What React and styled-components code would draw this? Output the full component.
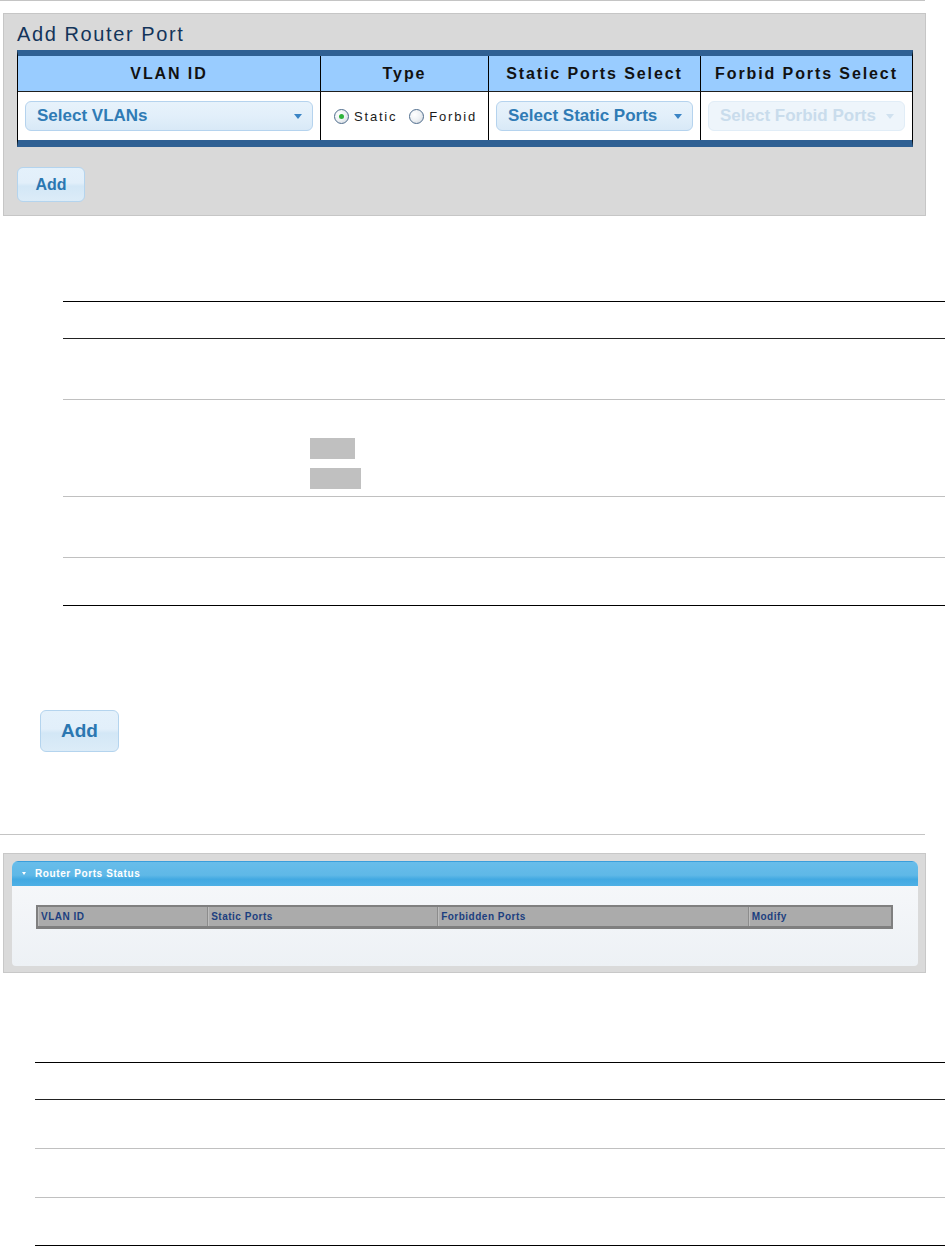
import React from 'react';
import styled, { createGlobalStyle } from 'styled-components';

const GlobalStyle = createGlobalStyle`
    body {
        margin: 0;
        background: #fff;
        font-family: "Liberation Sans", Arial, sans-serif;
    }
`;

const columns = [
    { title: 'VLAN ID', w: 302 },
    { title: 'Type', w: 167 },
    { title: 'Static Ports Select', w: 211 },
    { title: 'Forbid Ports Select', w: 211 },
];

const statusCols = [
    { title: 'VLAN ID', w: 171 },
    { title: 'Static Ports', w: 231 },
    { title: 'Forbidden Ports', w: 312 },
    { title: 'Modify', w: 143 },
];

export default function App() {
    return (
        <Page>
            <GlobalStyle />
            <Rule />

            <FormPanel>
                <Title>Add Router Port</Title>
                <FormTable>
                    <thead>
                        <tr>
                            {columns.map((c, i) => (
                                <Th key={c.title} $w={c.w} $last={i === columns.length - 1}>
                                    {c.title}
                                </Th>
                            ))}
                        </tr>
                    </thead>
                    <tbody>
                        <tr>
                            <Td>
                                <SelectBox>
                                    Select VLANs
                                    <Caret />
                                </SelectBox>
                            </Td>
                            <Td $radio>
                                <RadioGroup>
                                    <RadioLabel>
                                        <Radio $checked />
                                        Static
                                    </RadioLabel>
                                    <RadioLabel>
                                        <Radio />
                                        Forbid
                                    </RadioLabel>
                                </RadioGroup>
                            </Td>
                            <Td>
                                <SelectBox>
                                    Select Static Ports
                                    <Caret />
                                </SelectBox>
                            </Td>
                            <Td $last>
                                <SelectBox $disabled>
                                    Select Forbid Ports
                                    <Caret $disabled />
                                </SelectBox>
                            </Td>
                        </tr>
                    </tbody>
                </FormTable>
                <AddButton>Add</AddButton>
            </FormPanel>

            <DocTable $top={85} $left={63}>
                <DocRow $h={37} $head />
                <DocRow $h={61} />
                <DocRow $h={97}>
                    <span />
                    <Marks>
                        <Mark $w={45} />
                        <Mark $w={51} />
                    </Marks>
                </DocRow>
                <DocRow $h={61} />
                <DocRow $h={47} />
            </DocTable>

            <AddButton $big>Add</AddButton>

            <Rule $top={82} />

            <StatusPanel>
                <StatusBox>
                    <StatusHeader>
                        <Triangle />
                        Router Ports Status
                    </StatusHeader>
                    <StatusTable>
                        {statusCols.map((c) => (
                            <StatusCell key={c.title} $w={c.w}>{c.title}</StatusCell>
                        ))}
                    </StatusTable>
                </StatusBox>
            </StatusPanel>

            <DocTable $top={89} $left={35}>
                <DocRow $h={37} $head />
                <DocRow $h={49} />
                <DocRow $h={49} />
                <DocRow $h={47} />
            </DocTable>
        </Page>
    );
}

const Page = styled.div`
    width: 945px;
    display: flex;
    flex-direction: column;
    align-items: flex-start;
`

const Rule = styled.div`
    width: 925px;
    height: 1px;
    background: #c4c4c4;
    margin-top: ${p => p.$top || 0}px;
`

const FormPanel = styled.section`
    margin: 12px 0 0 3px;
    width: 923px;
    box-sizing: border-box;
    border: 1px solid #c6c6c6;
    background: #d9d9d9;
    padding: 9px 11px 13px 13px;
`

const Title = styled.h2`
    margin: 0 0 5px;
    font-size: 20px;
    line-height: 22px;
    font-weight: normal;
    letter-spacing: 1.6px;
    color: #13345a;
`

const FormTable = styled.table`
    width: 896px;
    border-spacing: 0;
    table-layout: fixed;
    border-top: 6px solid #2f6093;
    border-bottom: 7px solid #2f6093;
    border-left: 1px solid #000;
    border-right: 1px solid #000;
`

const Th = styled.th`
    width: ${p => p.$w}px;
    height: 35px;
    padding: 0;
    background: #99ccff;
    border-bottom: 1px solid #1e1e1e;
    border-right: ${p => (p.$last ? 'none' : '1px solid #000')};
    font-size: 16px;
    font-weight: bold;
    letter-spacing: 1.9px;
    color: #111;
    text-align: center;
    white-space: nowrap;
`

const Td = styled.td`
    height: 48px;
    padding: ${p => (p.$radio ? '0 0 0 13px' : '0 7px')};
    background: #fff;
    border-right: ${p => (p.$last ? 'none' : '1px solid #000')};
    vertical-align: middle;
`

const SelectBox = styled.div`
    height: 30px;
    box-sizing: border-box;
    display: flex;
    align-items: center;
    justify-content: space-between;
    padding: 0 10px 0 11px;
    border: 1px solid ${p => (p.$disabled ? '#e1edf7' : '#b5d3ee')};
    border-radius: 6px;
    background: ${p => (p.$disabled
        ? '#eef5fb'
        : 'linear-gradient(#e7f2fb 0%, #e2effa 50%, #d8e9f7 100%)')};
    font-size: 17px;
    font-weight: bold;
    color: ${p => (p.$disabled ? '#c9dcec' : '#2f7bb5')};
    white-space: nowrap;
`

const Caret = styled.span`
    width: 0;
    height: 0;
    border-left: 4px solid transparent;
    border-right: 4px solid transparent;
    border-top: 5px solid ${p => (p.$disabled ? '#d0e1ef' : '#3a84c5')};
`

const RadioGroup = styled.div`
    display: flex;
    align-items: center;
    gap: 12px;
`

const RadioLabel = styled.label`
    display: flex;
    align-items: center;
    gap: 5px;
    font-size: 13px;
    letter-spacing: 1.8px;
    color: #1a1a1a;
`

const Radio = styled.span`
    width: 15px;
    height: 15px;
    box-sizing: border-box;
    border-radius: 50%;
    border: 1px solid #4f6d8d;
    background: radial-gradient(circle at 35% 35%, #fff 0%, #eef1f4 50%, #c9d0d8 100%);
    display: flex;
    align-items: center;
    justify-content: center;
    &::after {
        content: "";
        width: 5px;
        height: 5px;
        border-radius: 50%;
        background: ${p => (p.$checked ? '#2fb33a' : 'transparent')};
    }
`

const AddButton = styled.button`
    display: block;
    margin: ${p => (p.$big ? '104px 0 0 40px' : '20px 0 0')};
    width: ${p => (p.$big ? 79 : 68)}px;
    height: ${p => (p.$big ? 42 : 35)}px;
    padding: 0;
    border: 1px solid #b4d4ee;
    border-radius: 6px;
    background: linear-gradient(#e4f1fb 0%, #e2effa 45%, #d3e7f6 55%, #dcecf8 100%);
    font-family: inherit;
    font-size: ${p => (p.$big ? 19 : 16)}px;
    font-weight: bold;
    color: #2b77b1;
    cursor: pointer;
`

const DocTable = styled.div`
    margin: ${p => p.$top}px 0 0 ${p => p.$left}px;
    width: ${p => 945 - p.$left}px;
    border-top: 1px solid #000;
    border-bottom: 1px solid #000;
`

const DocRow = styled.div`
    display: grid;
    grid-template-columns: 247px 1fr;
    height: ${p => p.$h}px;
    box-sizing: border-box;
    border-bottom: 1px solid ${p => (p.$head ? '#222' : '#c0c0c0')};
    &:last-child {
        border-bottom: none;
    }
`

const Marks = styled.div`
    display: flex;
    flex-direction: column;
    gap: 9px;
    padding-top: 38px;
`

const Mark = styled.span`
    width: ${p => p.$w}px;
    height: 21px;
    background: #c0c0c0;
`

const StatusPanel = styled.section`
    margin: 18px 0 0 3px;
    width: 923px;
    box-sizing: border-box;
    border: 1px solid #c8c8c8;
    background: #dadada;
    padding: 7px 7px 6px 8px;
`

const StatusBox = styled.div`
    height: 105px;
    border-radius: 6px 6px 4px 4px;
    overflow: hidden;
    background: linear-gradient(#f8f9fb, #edf1f5);
`

const StatusHeader = styled.div`
    height: 25px;
    box-sizing: border-box;
    display: flex;
    align-items: center;
    gap: 9px;
    padding: 0 0 2px 10px;
    border-top: 1px solid #3a9edb;
    background: linear-gradient(#68bdea 0%, #5fb8e7 55%, #42a9e2 72%, #4eb0e5 100%);
    font-size: 10px;
    font-weight: bold;
    letter-spacing: 0.6px;
    color: #fff;
`

const Triangle = styled.span`
    width: 0;
    height: 0;
    border-left: 2.5px solid transparent;
    border-right: 2.5px solid transparent;
    border-top: 3px solid #fff;
`

const StatusTable = styled.div`
    margin: 19px 0 0 24px;
    width: 857px;
    height: 24px;
    box-sizing: border-box;
    display: flex;
    border: 2px solid #7f7f7f;
    border-bottom-width: 3px;
    background: #ababab;
`

const StatusCell = styled.div`
    width: ${p => p.$w}px;
    box-sizing: border-box;
    display: flex;
    align-items: center;
    padding-left: 3px;
    border-right: 1px solid #8c8c8c;
    box-shadow: inset 1px 0 0 #bdbdbd;
    font-size: 10px;
    font-weight: bold;
    letter-spacing: 0.5px;
    color: #1c3f80;
    &:last-child {
        border-right: none;
    }
`
